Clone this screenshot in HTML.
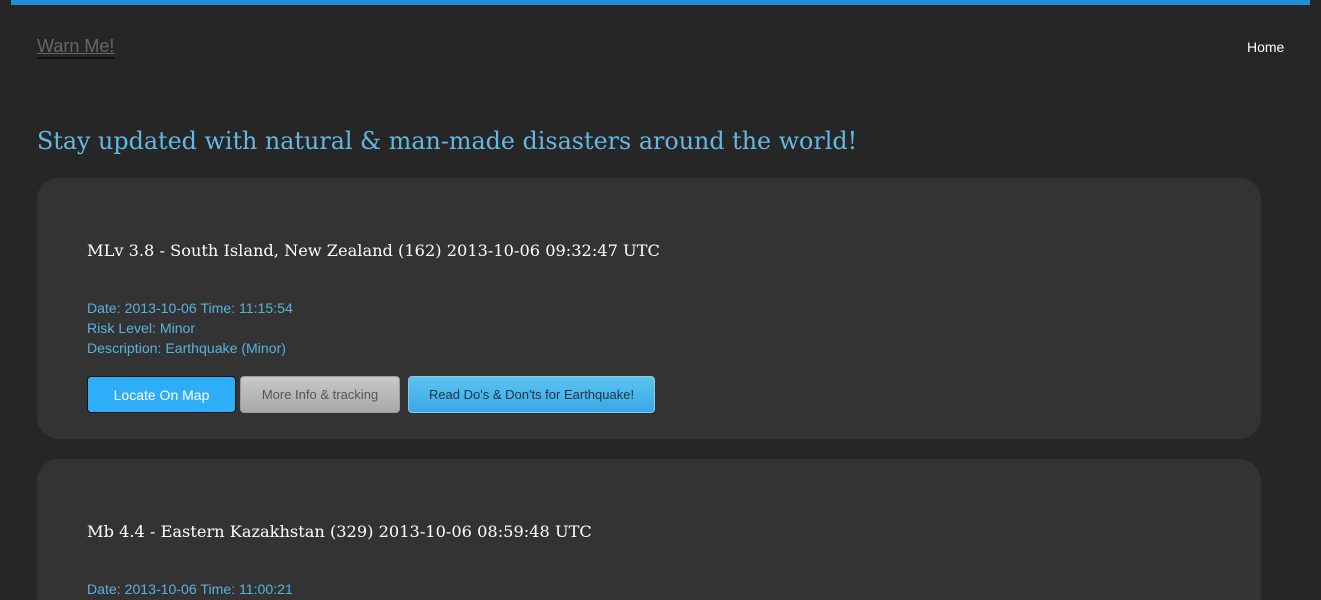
<!DOCTYPE html>
<html><head><style>
html,body{margin:0;height:600px;overflow:hidden}
body{background:#262626;width:1321px;font-family:"Liberation Sans",sans-serif;position:relative}
.bar{position:absolute;left:11px;top:0;width:1299px;height:5px;background:#1e90d8}
.logo{position:absolute;left:37px;top:36px;font-size:18px;color:#666;text-decoration:underline;border-bottom:2px solid #111;line-height:20px;padding-bottom:1px}
.home{position:absolute;left:1247px;top:39px;font-size:14px;color:#fff}
h1{position:absolute;left:37px;top:127px;margin:0;font-family:"DejaVu Serif",serif;font-weight:normal;font-size:23.8px;color:#62b8e4;white-space:nowrap}
.card{position:absolute;left:37px;width:1224px;background:#333;border-radius:22px}
.t{position:absolute;left:50px;font-family:"DejaVu Serif",serif;font-size:16.2px;color:#fff;white-space:nowrap}
.info{position:absolute;left:50px;font-size:14.1px;color:#58b2e0;line-height:20px}
.b{position:absolute;top:198px;height:37px;box-sizing:border-box;border-radius:4px;font-size:14px;display:flex;align-items:center;justify-content:center}
</style></head><body>
<div class="bar"></div>
<div class="logo">Warn Me!</div>
<div class="home">Home</div>
<h1>Stay updated with natural &amp; man-made disasters around the world!</h1>
<div class="card" style="top:178px;height:261px">
<div class="t" style="top:63px">MLv 3.8 - South Island, New Zealand (162) 2013-10-06 09:32:47 UTC</div>
<div class="info" style="top:120px">Date: 2013-10-06 Time: 11:15:54<br>Risk Level: Minor<br>Description: Earthquake (Minor)</div>
<div class="b" style="left:50px;width:149px;background:#2eaef8;border:1px solid #111;color:#fff">Locate On Map</div>
<div class="b" style="left:203px;width:160px;background:linear-gradient(#c8c8c8,#a8a8a8);border:1px solid #999;color:#555;font-size:13px">More Info &amp; tracking</div>
<div class="b" style="left:371px;width:247px;background:linear-gradient(#5cc4f0,#3aa8e8);border:1px solid #8cd;color:#234;font-size:13px">Read Do's &amp; Don'ts for Earthquake!</div>
</div>
<div class="card" style="top:459px;height:141px;border-bottom-left-radius:0;border-bottom-right-radius:0">
<div class="t" style="top:63px">Mb 4.4 - Eastern Kazakhstan (329) 2013-10-06 08:59:48 UTC</div>
<div class="info" style="top:120px">Date: 2013-10-06 Time: 11:00:21</div>
</div>
</body></html>
